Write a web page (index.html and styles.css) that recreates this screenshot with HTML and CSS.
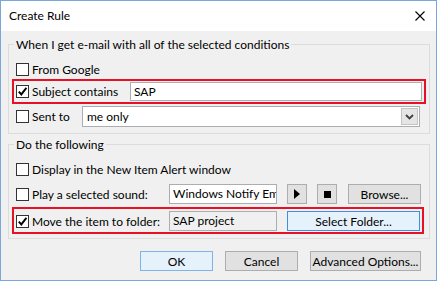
FILE: index.html
```html
<!DOCTYPE html>
<html lang="en">
<head>
    <meta charset="UTF-8">
    <title>Create Rule</title>
    <link rel="stylesheet" href="styles.css">
</head>
<body>
    <div class="dialog">
        <div class="titlebar">
            <span class="title">Create Rule</span>
            <svg class="close" width="10" height="10" viewBox="0 0 10 10">
                <path d="M0.5 0.5 L9.5 9.5 M9.5 0.5 L0.5 9.5" stroke="#000" stroke-width="1.1" fill="none"/>
            </svg>
        </div>

        <div class="content">
            <fieldset class="group">
                <legend>When I get e-mail with all of the selected conditions</legend>

                <div class="row first">
                    <span class="check"></span>
                    <span class="label">From Google</span>
                </div>

                <div class="row highlight">
                    <span class="check">
                        <svg viewBox="0 0 11 11"><polyline points="1.8,5.6 4.3,8.4 9.4,1.8" fill="none" stroke="#000" stroke-width="1.9"/></svg>
                    </span>
                    <span class="label w-subject">Subject contains</span>
                    <div class="field wide">SAP</div>
                </div>

                <div class="row">
                    <span class="check"></span>
                    <span class="label w-sent">Sent to</span>
                    <div class="combo">
                        <span class="combo-text">me only</span>
                        <span class="drop">
                            <svg width="9" height="6" viewBox="0 0 9 6"><polyline points="1,1 4.5,4.5 8,1" fill="none" stroke="#404040" stroke-width="1.8"/></svg>
                        </span>
                    </div>
                </div>
            </fieldset>

            <fieldset class="group actions">
                <legend>Do the following</legend>

                <div class="row first">
                    <span class="check"></span>
                    <span class="label">Display in the New Item Alert window</span>
                </div>

                <div class="row sound">
                    <span class="check"></span>
                    <span class="label w-action">Play a selected sound:</span>
                    <div class="field short">Windows Notify Email</div>
                    <button class="btn icon-btn">
                        <svg width="6" height="10" viewBox="0 0 6 10"><polygon points="0,0 6,5 0,10" fill="#000"/></svg>
                    </button>
                    <button class="btn icon-btn stop">
                        <svg width="7" height="7" viewBox="0 0 7 7"><rect width="7" height="7" fill="#000"/></svg>
                    </button>
                    <button class="btn browse">Browse...</button>
                </div>

                <div class="row highlight move">
                    <span class="check">
                        <svg viewBox="0 0 11 11"><polyline points="1.8,5.6 4.3,8.4 9.4,1.8" fill="none" stroke="#000" stroke-width="1.9"/></svg>
                    </span>
                    <span class="label w-action">Move the item to folder:</span>
                    <div class="field short readonly">SAP project</div>
                    <button class="btn focused select-folder">Select Folder...</button>
                </div>
            </fieldset>

            <div class="buttons">
                <button class="btn default">OK</button>
                <button class="btn">Cancel</button>
                <button class="btn advanced">Advanced Options...</button>
            </div>
        </div>
    </div>
</body>
</html>
```

FILE: styles.css
```css
* {
    box-sizing: border-box;
}

body {
    margin: 0;
    font-family: 'Lato', 'Noto Sans', sans-serif;
    font-size: 12px;
    color: #000;
    background: #fff;
}

.dialog {
    width: 437px;
    height: 281px;
    border: 1px solid #7ba6d9;
    background: #f0f0f0;
}

.titlebar {
    height: 30px;
    background: #fff;
    display: flex;
    align-items: center;
    justify-content: space-between;
    padding: 0 11px 0 8px;
}

.title {
    font-size: 12px;
    line-height: 16px;
}

.content {
    padding: 0 6px 0 7px;
}

.group {
    margin: 5px 0 0 0;
    padding: 0 7px 6px 7px;
    border: 1px solid #dcdcdc;
    min-width: 0;
}

.group legend {
    padding: 0 2px;
    margin-left: -2px;
    line-height: 17px;
}

.actions {
    margin-top: 2px;
    padding-bottom: 4px;
}

.row {
    display: flex;
    align-items: center;
    height: 21px;
    margin-top: 2px;
    white-space: nowrap;
}

.row.first {
    margin-top: 6px;
}

.row.highlight {
    height: auto;
    margin: -1px -4px 0 -4px;
    padding: 1px 2px;
    border: 2px solid #e81123;
}

.row.sound {
    height: 20px;
    margin-top: 4px;
}

.row.move {
    margin: 3px -2px 0 -4px;
    padding: 2px 2px 1px 2px;
}

.check {
    width: 13px;
    height: 13px;
    flex: none;
    border: 1px solid #333;
    background: #fff;
    display: flex;
}

.check svg {
    width: 11px;
    height: 11px;
}

.label {
    margin-left: 3px;
    flex: none;
}

.w-subject { width: 98px; }
.w-sent { width: 50px; }
.w-action { width: 137px; }

.field {
    height: 19px;
    border: 1px solid #abadb3;
    background: #fff;
    padding: 0 3px;
    line-height: 17px;
    overflow: hidden;
    white-space: nowrap;
}

.field.wide {
    flex: 1;
}

.field.short {
    width: 108px;
    height: 20px;
    line-height: 18px;
    flex: none;
}

.field.readonly {
    background: #f0f0f0;
}

.combo {
    flex: 1;
    margin-right: 2px;
    height: 21px;
    border: 1px solid #abadb3;
    background: #fff;
    display: flex;
    align-items: center;
    padding: 1px;
}

.combo-text {
    flex: 1;
    padding-left: 3px;
}

.drop {
    width: 17px;
    height: 17px;
    background: #e5e5e5;
    border: 1px solid #c4c4c4;
    display: flex;
    align-items: center;
    justify-content: center;
}

.btn {
    font-family: inherit;
    font-size: 12px;
    color: #000;
    height: 20px;
    padding: 0;
    background: #e1e1e1;
    border: 1px solid #adadad;
    display: flex;
    align-items: center;
    justify-content: center;
    flex: none;
}

.icon-btn {
    width: 20px;
    margin-left: 10px;
}

.icon-btn.stop {
    margin-left: 10px;
}

.browse {
    width: 73px;
    margin-left: 11px;
}

.select-folder {
    width: 133px;
    margin-left: 10px;
}

.btn.focused {
    background: #e5f1fb;
    border-color: #3d8ee5;
}

.buttons {
    display: flex;
    justify-content: flex-end;
    gap: 12px;
    margin-top: 12px;
    padding-right: 9px;
}

.buttons .btn {
    width: 73px;
}

.buttons .advanced {
    width: 111px;
}

.btn.default {
    background: #e5f1fb;
    border-color: #7eb4ea;
}
```
